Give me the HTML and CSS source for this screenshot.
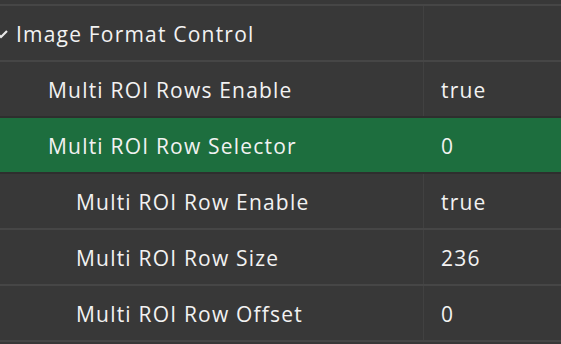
FILE: index.html
```html
<!DOCTYPE html>
<html lang="en">
<head>
<meta charset="UTF-8" />
<title>Feature tree</title>
<link rel="stylesheet" href="styles.css">
</head>
<body>
<div class="tree">
	<div class="row group">
		<div class="name"><svg class="chev" width="14" height="10" viewBox="0 0 14 10"><path d="M1 2 L7 8 L13 2" fill="none" stroke="#e8e8e8" stroke-width="2.2"/></svg>Image Format Control</div>
		<div class="value"></div>
	</div>
	<div class="row">
		<div class="name l1">Multi ROI Rows Enable</div>
		<div class="value">true</div>
	</div>
	<div class="row sel">
		<div class="name l1">Multi ROI Row Selector</div>
		<div class="value">0</div>
	</div>
	<div class="row">
		<div class="name l2">Multi ROI Row Enable</div>
		<div class="value">true</div>
	</div>
	<div class="row">
		<div class="name l2">Multi ROI Row Size</div>
		<div class="value">236</div>
	</div>
	<div class="row">
		<div class="name l2">Multi ROI Row Offset</div>
		<div class="value">0</div>
	</div>
	<div class="row end"></div>
</div>
</body>
</html>
```
FILE: styles.css
```css
html, body{
	margin: 0;
	background: #383838;
	overflow: hidden;
}
.tree{
	padding-top: 4px;
	font-family: "Open Sans", "Noto Sans", sans-serif;
	font-size: 21px;
	letter-spacing: 1.2px;
	color: #f2f2f2;
}
.row{
	display: grid;
	grid-template-columns: 424px 1fr;
	height: 54px;
	border-top: 2px solid #464646;
}
.row.end{
	height: 2px;
}
.row.sel{
	background: #1d6e3e;
	border-top-color: #2e2e2e;
}
.row.sel + .row{
	border-top-color: #2e2e2e;
}
.name, .value{
	display: flex;
	align-items: center;
	padding-top: 1px;
	white-space: nowrap;
}
.name{
	padding-left: 16px;
	border-right: 1px solid #414141;
}
.sel .name{
	border-right-color: transparent;
}
.name.l1{
	padding-left: 48px;
}
.name.l2{
	padding-left: 76px;
}
.value{
	padding-left: 17px;
}
.chev{
	margin-left: -22px;
	margin-right: 8px;
}
```
